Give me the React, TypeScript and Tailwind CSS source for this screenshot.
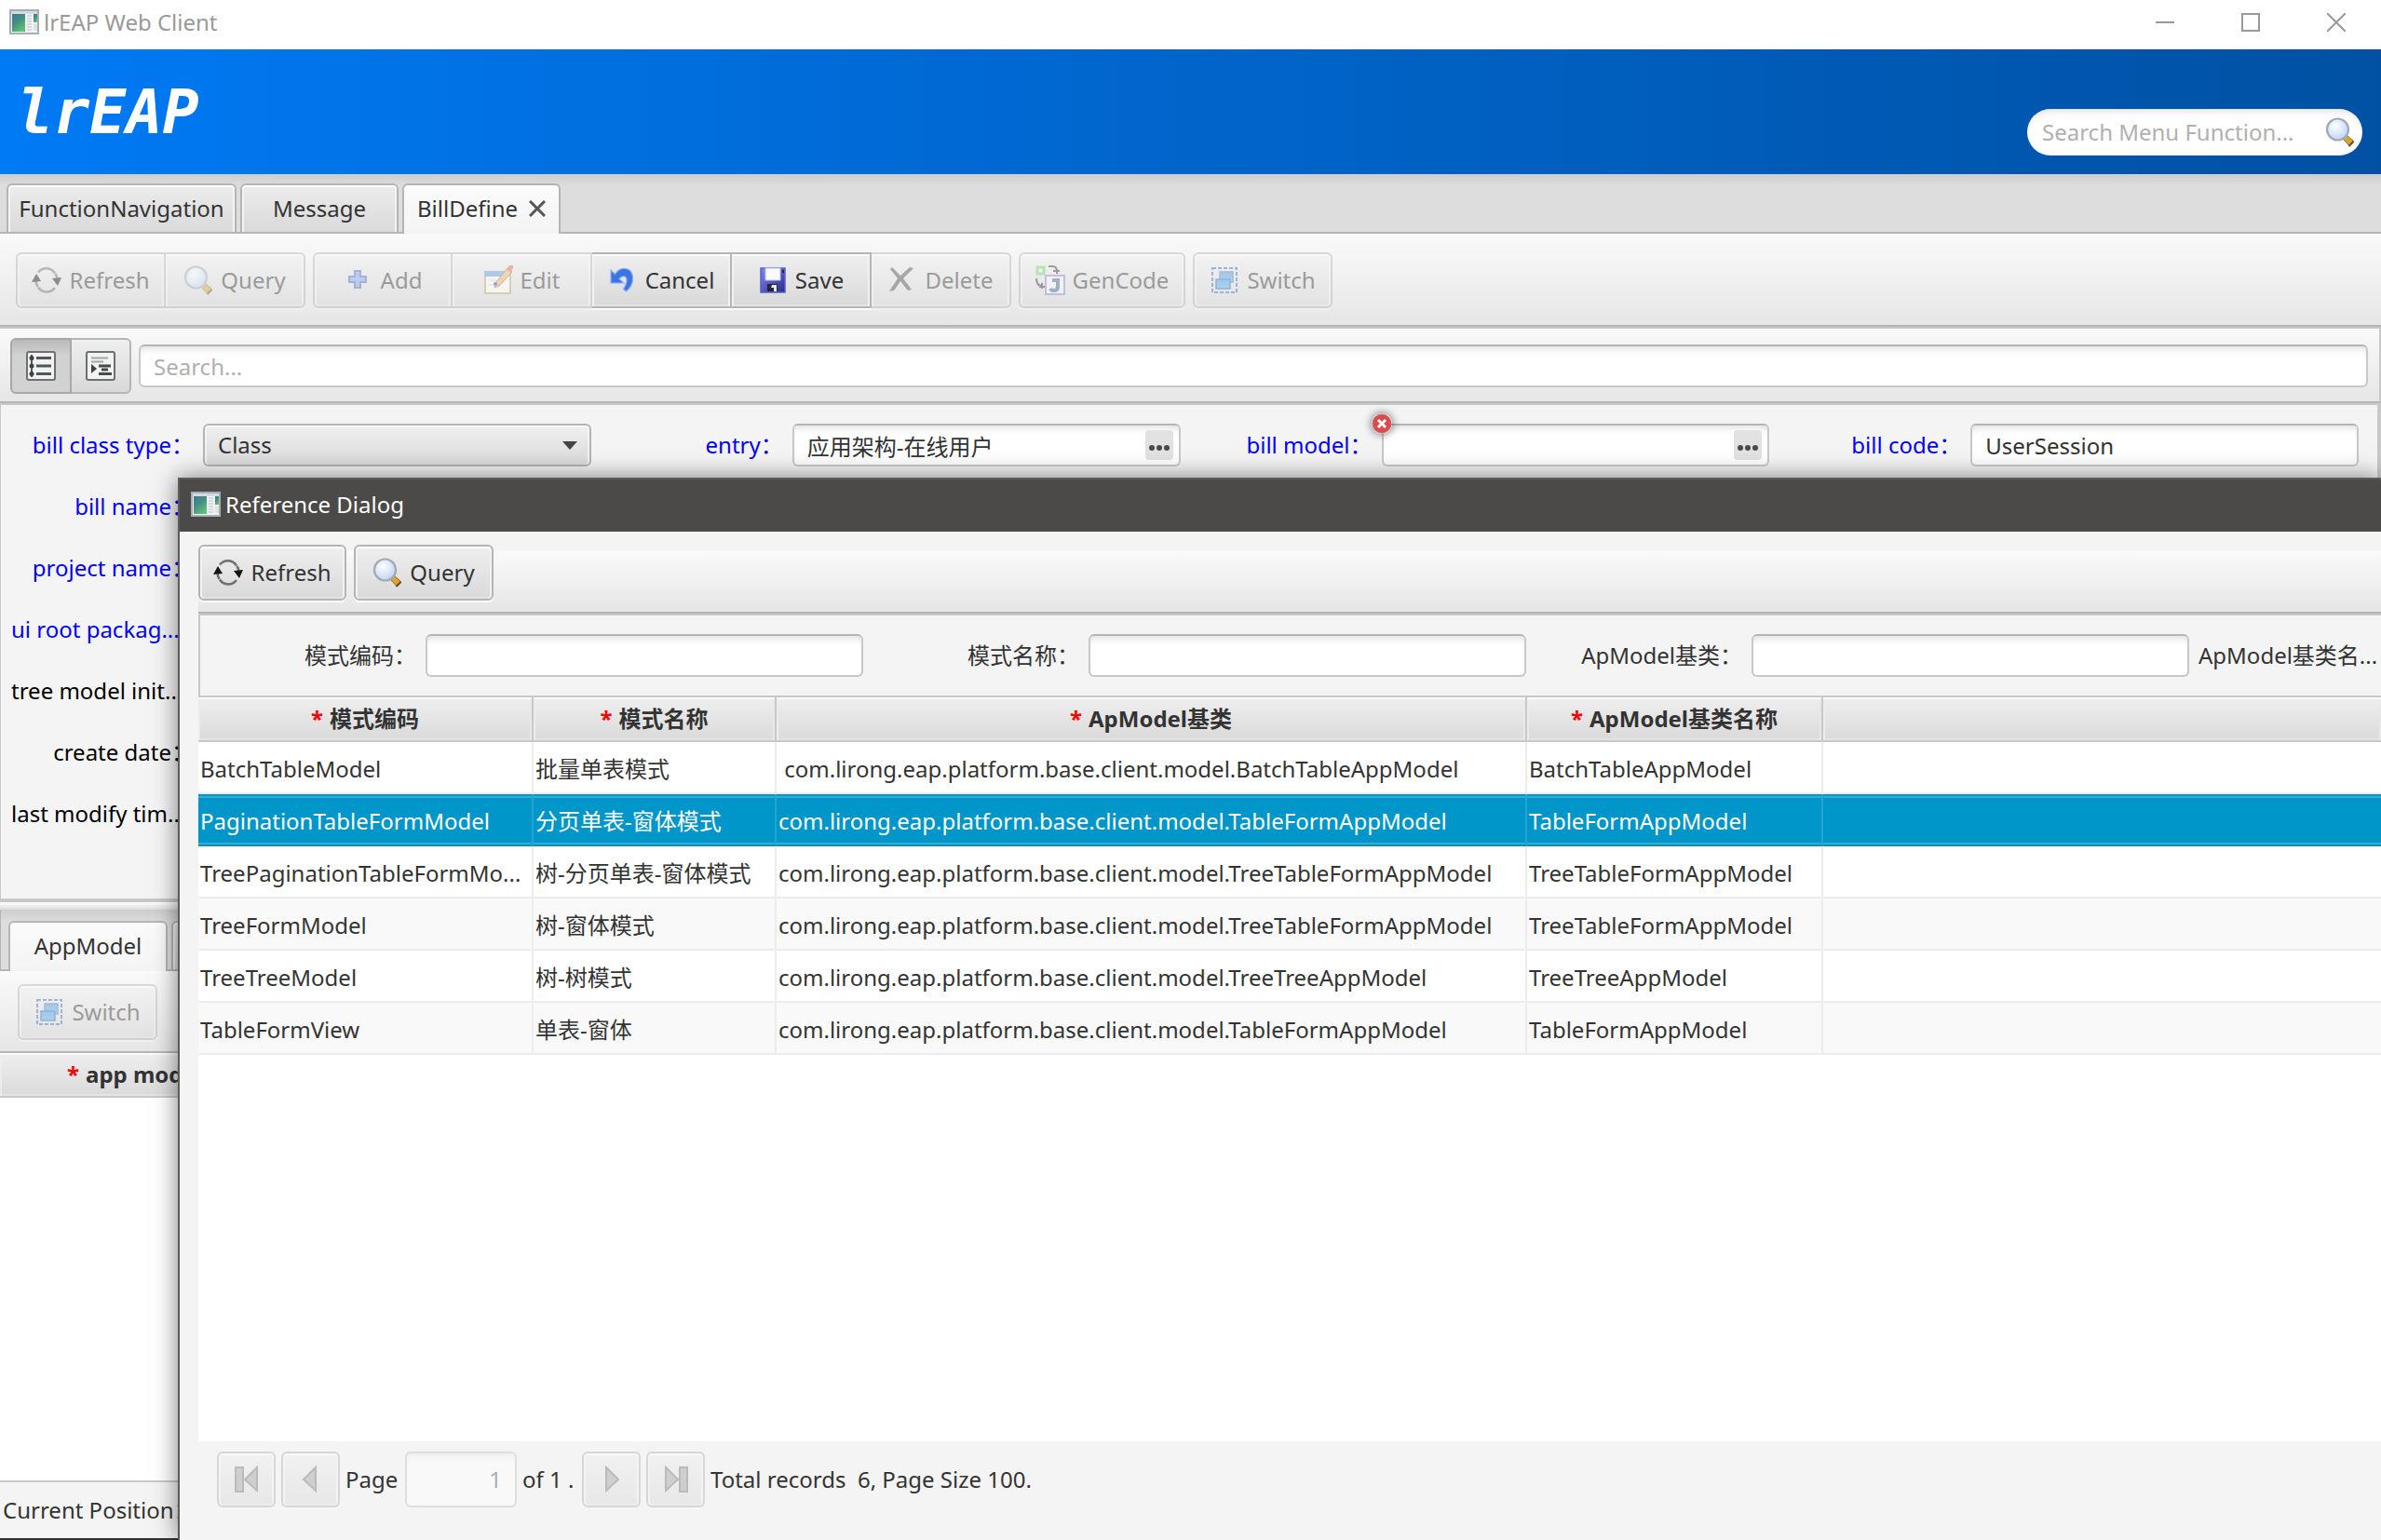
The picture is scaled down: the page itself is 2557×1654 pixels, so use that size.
import { useState } from 'react'
import type { ReactNode } from 'react'

const btn =
  'flex items-center justify-center gap-2 h-[60px] border-2 border-[#b5b5b5] bg-linear-to-b from-[#efefef] to-[#d9d9d9] shadow-[inset_0_2px_0_#fdfdfd,inset_2px_0_0_#f2f2f2,inset_-2px_0_0_#f2f2f2,inset_0_-2px_0_#e3e3e3,0_2px_0_#fafafa] disabled:opacity-45'
const box =
  'h-[46px] border-2 border-[#c8c8c8] border-t-[#b5b5b5] rounded-md bg-white shadow-[inset_0_8px_8px_-6px_#dcdcdc] px-[14px] outline-none placeholder:text-[#b0b0b0]'
const tabIdle = 'bg-linear-to-b from-[#ececec] to-[#dadada] shadow-[inset_0_2px_0_#fff,inset_2px_0_0_#f4f4f4,inset_-2px_0_0_#f4f4f4]'
const tabActive = 'bg-linear-to-b from-[#fbfbfb] to-[#f4f4f4] -mb-[2px] pb-[2px]'
const headCell =
  'h-12 p-0 font-bold border-r-2 border-b-2 border-[#c8c8c8] last:border-r-0 bg-linear-to-b from-[#efefef] to-[#dadada] shadow-[inset_0_2px_0_#fafafa,inset_2px_0_0_#ececec,inset_-2px_0_0_#e8e8e8,inset_0_-2px_0_#e4e4e4]'

const WindowIcon = () => (
  <svg width="32" height="38" viewBox="0 0 32 38" className="shrink-0">
    <defs>
      <linearGradient id="win" x1="0" y1="0" x2="0.6" y2="1">
        <stop offset="0" stopColor="#3f7794" />
        <stop offset="0.5" stopColor="#449083" />
        <stop offset="1" stopColor="#5fbf74" />
      </linearGradient>
    </defs>
    <rect x="1" y="5" width="30" height="30" fill="none" />
    <rect x="1" y="6" width="30" height="25" fill="#f1f2f3" stroke="#a8afb4" strokeWidth="2" />
    <path d="M2 7h28v3H2z" fill="#d3dae0" />
    <rect x="3" y="10" width="14" height="19" fill="url(#win)" />
    <path d="M19 12h5M19 15h5M19 18h5M19 21h5M19 24h5M19 27h5" stroke="#bcc2c6" strokeWidth="1" />
    <rect x="26" y="10" width="4" height="9" fill="url(#win)" />
    <path d="M26 21h4v7h-4z" fill="#dfe1e3" />
  </svg>
)

const RefreshIcon = () => (
  <svg width="32" height="32" viewBox="0 0 32 32" fill="none">
    <path d="M7 7.500C12 1.500 21 2 25 8.500M25.500 9Q27.500 12 27.500 16" stroke="#6f6f6f" strokeWidth="2.600" />
    <path d="M25 24C20 30.500 11 29.500 7 23.500M6.500 23Q4.500 20 4.500 15" stroke="#6f6f6f" strokeWidth="2.600" />
    <path d="M22 14l10-1-4 9z" fill="#151515" />
    <path d="M0 18l5-9 5 8z" fill="#151515" />
  </svg>
)

const QueryIcon = () => (
  <svg width="32" height="32" viewBox="0 0 32 32">
    <defs>
      <radialGradient id="lens" cx="0.4" cy="0.35" r="0.7">
        <stop offset="0" stopColor="#ffffff" />
        <stop offset="1" stopColor="#bcd2f5" />
      </radialGradient>
    </defs>
    <path d="M19 23l4-4 7.500 6.500-4.500 5z" fill="#d9a431" stroke="#8f6a22" strokeWidth="1" />
    <path d="M25.500 31l5-5" stroke="#5c4a2a" strokeWidth="2" />
    <circle cx="13.500" cy="13" r="11.500" fill="url(#lens)" stroke="#a2a9b2" strokeWidth="2.200" />
  </svg>
)

const AddIcon = () => (
  <svg width="32" height="32" viewBox="0 0 32 32">
    <path d="M12 6h6v6h6v6h-6v6h-6v-6H6v-6h6z" fill="#7ba0e8" stroke="#4468bd" strokeWidth="2" />
  </svg>
)

const EditIcon = () => (
  <svg width="32" height="32" viewBox="0 0 32 32">
    <rect x="2" y="7" width="27" height="23" fill="#fdfdfb" stroke="#c2a860" strokeWidth="2" />
    <path d="M1 6h22v6H1z" fill="#5d9ed6" />
    <path d="M5 16h9M5 21h6" stroke="#d8dee8" strokeWidth="1.500" />
    <path d="M13 19L26 3l5 4-14 15-5 2z" fill="#e9b765" stroke="#9a6b35" strokeWidth="1" />
    <path d="M25 4l3-4h4v3l-3 5z" fill="#d96a58" />
    <circle cx="13" cy="20" r="2" fill="#334a7a" />
  </svg>
)

const CancelIcon = () => (
  <svg width="32" height="32" viewBox="0 0 32 32">
    <path d="M3 5v14h14l-5-4.500c3-4 7.500-3.500 8 .5 .5 4-1.500 7-3.500 10.500l3 2.500c5-4 7.500-10 7-15.500C25.500 1.500 13 .5 7.500 9.500z" fill="#3c74e2" stroke="#88b0f6" strokeWidth="1.200" />
  </svg>
)

const SaveIcon = () => (
  <svg width="32" height="32" viewBox="0 0 32 32">
    <defs>
      <linearGradient id="disk" x1="0" y1="0" x2="1" y2="1">
        <stop offset="0" stopColor="#8286f2" />
        <stop offset="1" stopColor="#292b8e" />
      </linearGradient>
    </defs>
    <rect x="3" y="3" width="26" height="26" fill="url(#disk)" stroke="#5a5fc4" strokeWidth="1.500" />
    <rect x="8" y="3" width="16" height="13" fill="#fbfbff" stroke="#b9bdf2" strokeWidth="1" />
    <rect x="26" y="5" width="2" height="3" fill="#1d1f5e" />
    <rect x="10" y="20" width="11" height="8" fill="#23263a" />
    <path d="M15 21h5v7h-3v-4h-3z" fill="#e8e8f0" />
  </svg>
)

const DeleteIcon = () => (
  <svg width="32" height="32" viewBox="0 0 32 32">
    <path d="M4 2l9 9 10-9 4 1-11 11 9 12-4 1-8-10-7 10-5 1 9-14-8-10z" fill="#4e4e4e" />
  </svg>
)

const GenIcon = () => (
  <svg width="32" height="34" viewBox="0 0 32 34" fill="none">
    <rect x="2" y="3" width="7" height="7" fill="#eefbe9" stroke="#6fd060" strokeWidth="3" />
    <path d="M14 2h4q5 0 5 5M19 7h7M23 5v5M1 15q0 8 6 8M7 20v6M4 24h6" stroke="#333" strokeWidth="2" />
    <rect x="11" y="12" width="20" height="20" fill="#f4f4ff" stroke="#8f83dc" strokeWidth="2" />
    <path d="M18 17h6v7q0 4-4 4-3 0-4-2" stroke="#42678f" strokeWidth="4" />
  </svg>
)

const SwitchIcon = () => (
  <svg width="32" height="32" viewBox="0 0 32 32">
    <defs>
      <linearGradient id="sw" x1="0" y1="0" x2="0" y2="1">
        <stop offset="0" stopColor="#4e93dc" />
        <stop offset="1" stopColor="#46b4f6" />
      </linearGradient>
    </defs>
    <rect x="3" y="3" width="26" height="26" fill="none" stroke="#3b67c2" strokeWidth="2" strokeDasharray="4 2" />
    <rect x="11" y="7" width="14" height="11" fill="url(#sw)" stroke="#4a78bd" strokeWidth="1.500" />
    <rect x="7" y="15" width="15" height="10" fill="url(#sw)" stroke="#3564b4" strokeWidth="1.500" />
  </svg>
)

const ListIcon = () => (
  <svg width="34" height="34" viewBox="0 0 34 34">
    <rect x="2" y="2" width="30" height="30" rx="2" fill="#f1f2f1" stroke="#6d7070" strokeWidth="2" />
    <path d="M7 5v24" stroke="#555a5c" strokeWidth="2" />
    <path d="M12 8.500h16M12 17h16M12 25.500h16" stroke="#50575a" strokeWidth="3" />
    <circle cx="7" cy="8.500" r="2.500" fill="#3c4144" />
    <circle cx="7" cy="17" r="2.500" fill="#3c4144" />
    <circle cx="7" cy="25.500" r="2.500" fill="#3c4144" />
  </svg>
)

const IndentIcon = () => (
  <svg width="34" height="34" viewBox="0 0 34 34">
    <rect x="2" y="2" width="30" height="30" rx="2" fill="#f1f2f1" stroke="#6d7070" strokeWidth="2" />
    <path d="M7 8.500h18M7 12.500h13" stroke="#a5a5a0" strokeWidth="2" />
    <path d="M15 17h13M18 21h7M15 25.500h14" stroke="#454b4e" strokeWidth="3" />
    <path d="M7 15l6 5-6 5z" fill="#3c4144" />
  </svg>
)

const pageIcons: Record<string, ReactNode> = {
  first: <><path d="M5 4h8v26H5z" /><path d="M28 4v25L15 17z" /></>,
  prev: <path d="M22 4v25L9 17z" />,
  next: <path d="M11 4v25l13-12z" />,
  last: <><path d="M21 4h8v26h-8z" /><path d="M6 4v25l13-12z" /></>,
}

const PageButton = ({ name }: { name: string }) => (
  <button disabled aria-label={name} className={btn + ' w-[63px] rounded-md'}>
    <svg width="34" height="34" viewBox="0 0 34 34" fill="#a4a4a4" stroke="#777" strokeWidth="2">{pageIcons[name]}</svg>
  </button>
)

const tools = [
  [
    { text: 'Refresh', icon: <RefreshIcon />, off: true, cls: 'w-[161px] rounded-l-md' },
    { text: 'Query', icon: <QueryIcon />, off: true, cls: 'w-[150px] rounded-r-md border-l-0' },
  ],
  [
    { text: 'Add', icon: <AddIcon />, off: true, cls: 'w-[150px] rounded-l-md' },
    { text: 'Edit', icon: <EditIcon />, off: true, cls: 'w-[150px] border-l-0' },
    { text: 'Cancel', icon: <CancelIcon />, off: false, cls: 'w-[150px] border-l-0' },
    { text: 'Save', icon: <SaveIcon />, off: false, cls: 'w-[150px] border-l-0' },
    { text: 'Delete', icon: <DeleteIcon />, off: true, cls: 'w-[150px] rounded-r-md border-l-0' },
  ],
  [{ text: 'GenCode', icon: <GenIcon />, off: true, cls: 'w-[179px] rounded-md' }],
  [{ text: 'Switch', icon: <SwitchIcon />, off: true, cls: 'w-[150px] rounded-md' }],
]

const rows = [
  ['BatchTableModel', '批量单表模式', ' com.lirong.eap.platform.base.client.model.BatchTableAppModel', 'BatchTableAppModel'],
  ['PaginationTableFormModel', '分页单表-窗体模式', 'com.lirong.eap.platform.base.client.model.TableFormAppModel', 'TableFormAppModel'],
  ['TreePaginationTableFormMo...', '树-分页单表-窗体模式', 'com.lirong.eap.platform.base.client.model.TreeTableFormAppModel', 'TreeTableFormAppModel'],
  ['TreeFormModel', '树-窗体模式', 'com.lirong.eap.platform.base.client.model.TreeTableFormAppModel', 'TreeTableFormAppModel'],
  ['TreeTreeModel', '树-树模式', 'com.lirong.eap.platform.base.client.model.TreeTreeAppModel', 'TreeTreeAppModel'],
  ['TableFormView', '单表-窗体', 'com.lirong.eap.platform.base.client.model.TableFormAppModel', 'TableFormAppModel'],
]

const MoreButton = () => (
  <button type="button" aria-label="more" className="absolute right-2 top-[7px] w-[30px] h-8 rounded bg-[#e2e2e2] flex items-center justify-center">
    <svg width="24" height="12" viewBox="0 0 24 12" fill="#4a4a4a">
      <circle cx="4" cy="9" r="3" /><circle cx="12" cy="9" r="3" /><circle cx="20" cy="9" r="3" />
    </svg>
  </button>
)

const Field = ({ id, label, children }: { id: string; label: string; children: ReactNode }) => (
  <div className="flex items-center gap-[10px]">
    <label htmlFor={id} className="w-[196px] shrink-0 text-right whitespace-nowrap text-[#0000ff]">{label}</label>
    <div className="relative flex-1 h-[46px]">{children}</div>
  </div>
)

// rows of the form that continue under the dialog
const sideFields = [
  { label: 'bill name：', cls: 'text-right text-[#0000ff]' },
  { label: 'project name：', cls: 'text-right text-[#0000ff]' },
  { label: 'ui root packag...', cls: 'text-left text-[#0000ff]' },
  { label: 'tree model init...', cls: 'text-left text-black' },
  { label: 'create date：', cls: 'text-right text-black' },
  { label: 'last modify tim...', cls: 'text-left text-black' },
]

const Star = () => <span className="text-[#ff0000] mr-[7px]">*</span>

const ReferenceDialog = () => {
  const [selected, setSelected] = useState(1)

  return (
    <div role="dialog" aria-label="Reference Dialog" className="absolute left-[191px] top-[513px] right-0 bottom-0 flex flex-col overflow-hidden border-l-2 border-t-2 border-[#5b5b59] bg-[#f4f4f4] shadow-[0_0_24px_rgba(0,0,0,0.5)]">
      <div className="h-14 shrink-0 bg-[#4c4a48] flex items-center gap-[5px] pl-3 pb-[2px] text-white">
        <WindowIcon />
        <span>Reference Dialog</span>
      </div>
      <div className="flex-1 flex flex-col pl-5 pt-5">
        <div className="h-[68px] shrink-0 flex items-end gap-2 pb-3 border-b-2 border-[#b5b5b5] bg-linear-to-b from-[#fafafa] to-[#e6e6e6]">
          <button className={btn + ' w-[159px] rounded-md'}><RefreshIcon />Refresh</button>
          <button className={btn + ' w-[150px] rounded-md'}><QueryIcon />Query</button>
        </div>
        <div className="h-[90px] shrink-0 flex items-center gap-[10px] pl-[10px] border-2 border-r-0 border-[#c8c8c8] whitespace-nowrap">
          <label htmlFor="q1" className="w-[222px] shrink-0 text-right">模式编码：</label>
          <input id="q1" className={box + ' w-[470px] shrink-0'} />
          <label htmlFor="q2" className="w-[222px] shrink-0 text-right">模式名称：</label>
          <input id="q2" className={box + ' w-[470px] shrink-0'} />
          <label htmlFor="q3" className="w-[222px] shrink-0 text-right">ApModel基类：</label>
          <input id="q3" className={box + ' w-[470px] shrink-0'} />
          <span>ApModel基类名...</span>
        </div>
        <div className="flex-1 bg-white">
          <table className="w-full table-fixed border-separate border-spacing-0">
            <colgroup>
              <col className="w-[360px]" />
              <col className="w-[261px]" />
              <col className="w-[806px]" />
              <col className="w-[318px]" />
              <col />
            </colgroup>
            <thead>
              <tr>
                <th className={headCell}><Star />模式编码</th>
                <th className={headCell}><Star />模式名称</th>
                <th className={headCell}><Star />ApModel基类</th>
                <th className={headCell}><Star />ApModel基类名称</th>
                <th className={headCell}></th>
              </tr>
            </thead>
            <tbody>
              {rows.map((row, i) => (
                <tr
                  key={i}
                  onClick={() => setSelected(i)}
                  className={i === selected ? 'bg-[#0096c9] text-white' : i % 2 ? 'bg-[#f9f9f9]' : 'bg-white'}
                >
                  {[...row, ''].map((cell, j) => (
                    <td
                      key={j}
                      className={
                        'h-14 p-0 pt-1 pl-[2px] whitespace-pre overflow-hidden border-r-2 border-b-2 last:border-r-0 ' +
                        (i === selected
                          ? 'border-r-[#22a5d1] border-b-[#0d8fbe] shadow-[inset_0_2px_0_#0096c9,inset_0_4px_0_#34acd6,inset_0_-2px_0_#34acd6]'
                          : 'border-[#ededed]')
                      }
                    >
                      {cell}
                    </td>
                  ))}
                </tr>
              ))}
            </tbody>
          </table>
        </div>
        <div className="h-[106px] shrink-0 flex items-start gap-[6px] pt-[11px] pl-5 leading-[60px]">
          <PageButton name="first" />
          <PageButton name="prev" />
          <label htmlFor="page" className="w-[58px]">Page</label>
          <input id="page" disabled defaultValue="1" className="w-[120px] h-[60px] rounded-md border-2 border-[#dedede] bg-[#f9f9f9] shadow-[inset_0_8px_8px_-6px_#ebebeb] px-[14px] text-right text-[#adadad]" />
          <span className="w-[58px] whitespace-nowrap">of 1 .</span>
          <PageButton name="next" />
          <PageButton name="last" />
          <span className="whitespace-pre">Total records  6, Page Size 100.</span>
        </div>
      </div>
    </div>
  )
}

export default function App() {
  const [view, setView] = useState('list')

  return (
    <div className="relative h-screen flex flex-col overflow-hidden bg-[#f4f4f4] text-[#333] text-[24px] leading-8 font-['Noto_Sans','Noto_Sans_CJK_SC',sans-serif]">
      <div className="h-[53px] shrink-0 bg-white flex items-center gap-[5px] pl-[10px] pb-[5px] text-[#999]">
        <WindowIcon />
        <span className="flex-1">lrEAP Web Client</span>
        <div className="flex pr-4 gap-[40px]">
          <button aria-label="Minimize" className="px-4"><svg width="20" height="20" stroke="#999" strokeWidth="2"><path d="M0 10h20" /></svg></button>
          <button aria-label="Maximize" className="px-4"><svg width="20" height="20" fill="none" stroke="#999" strokeWidth="2"><path d="M1 1h18v18H1z" /></svg></button>
          <button aria-label="Close" className="pl-4 pr-[22px]"><svg width="20" height="20" stroke="#999" strokeWidth="2"><path d="M0 0l20 20M20 0L0 20" /></svg></button>
        </div>
      </div>

      <header className="h-[134px] shrink-0 flex items-end justify-between pl-[18px] pr-5 pb-5 bg-linear-to-r from-[#007af5] to-[#0051a3]">
        <h1 className="font-['DejaVu_Sans_Mono',monospace] font-bold italic text-[65px] leading-[92px] text-white">lrEAP</h1>
        <div className="w-[360px] h-[50px] rounded-full bg-white shadow-[inset_0_8px_8px_-6px_#dcdcdc] flex items-center pl-4 pr-2">
          <input aria-label="Search menu" placeholder="Search Menu Function..." className="flex-1 min-w-0 bg-transparent outline-none placeholder:text-[#b0b0b0]" />
          <QueryIcon />
        </div>
      </header>

      <div role="tablist" className="h-16 shrink-0 flex items-end gap-1 pl-[7px] border-b-2 border-[#b5b5b5] bg-linear-to-b from-[#cdcdcd] to-[#dddddd] to-20%">
        <button role="tab" className={'h-[52px] w-[247px] border-2 border-b-0 border-[#b5b5b5] rounded-t-md ' + tabIdle}>FunctionNavigation</button>
        <button role="tab" className={'h-[52px] w-[170px] border-2 border-b-0 border-[#b5b5b5] rounded-t-md ' + tabIdle}>Message</button>
        <button role="tab" aria-selected="true" className={'h-[54px] w-[170px] border-2 border-b-0 border-[#b5b5b5] rounded-t-md flex items-center justify-center gap-3 ' + tabActive}>
          BillDefine
          <svg width="18" height="18" stroke="#555" strokeWidth="3"><path d="M1 1l16 16M17 1L1 17" /></svg>
        </button>
      </div>

      <div className="h-[100px] shrink-0 flex items-start gap-2 pl-[17px] pt-5 border-b-2 border-[#b5b5b5] bg-linear-to-b from-[#fafafa] to-[#e6e6e6]">
        {tools.map((group, i) => (
          <div key={i} className="flex">
            {group.map((t) => (
              <button key={t.text} disabled={t.off} className={btn + ' ' + t.cls}>{t.icon}{t.text}</button>
            ))}
          </div>
        ))}
      </div>

      <div className="h-[82px] shrink-0 flex items-center gap-2 pl-[11px] pr-3 pt-[2px] border-t-2 border-b-2 border-r-2 border-[#c8c8c8] border-b-[#b5b5b5] bg-linear-to-b from-[#fafafa] to-[#e6e6e6]">
        <div className="flex">
          <button
            aria-label="List view"
            onClick={() => setView('list')}
            className={'h-[60px] w-[66px] flex items-center justify-center border-2 border-[#a8a8a8] rounded-l-md ' + (view === 'list' ? 'bg-linear-to-b from-[#b9b9b9] to-[#d2d2d2] to-30%' : 'bg-linear-to-b from-[#efefef] to-[#d9d9d9]')}
          >
            <ListIcon />
          </button>
          <button
            aria-label="Form view"
            onClick={() => setView('form')}
            className={'h-[60px] w-16 flex items-center justify-center border-2 border-l-0 border-[#b5b5b5] rounded-r-md ' + (view === 'form' ? 'bg-linear-to-b from-[#b9b9b9] to-[#d2d2d2] to-30%' : 'bg-linear-to-b from-[#efefef] to-[#d9d9d9]')}
          >
            <IndentIcon />
          </button>
        </div>
        <input aria-label="Search" placeholder="Search..." className={box + ' flex-1'} />
      </div>

      <form className="h-[536px] shrink-0 pt-5 pl-[11px] pr-5 border-t-2 border-b-4 border-l border-r-4 border-[#c8c8c8]">
        <div className="grid grid-cols-4 gap-[10px]">
          <Field id="type" label="bill class type：">
            <select id="type" className="appearance-none w-full h-[46px] px-[14px] rounded-md border-2 border-[#b5b5b5] bg-linear-to-b from-[#efefef] to-[#dadada] shadow-[inset_0_2px_0_#fafafa,inset_2px_0_0_#f2f2f2,inset_-2px_0_0_#f2f2f2]">
              <option>Class</option>
            </select>
            <svg width="16" height="9" className="absolute right-[15px] top-[19px] pointer-events-none" fill="#444"><path d="M0 0h16L8 9z" /></svg>
          </Field>
          <Field id="entry" label="entry：">
            <input id="entry" defaultValue="应用架构-在线用户" className={box + ' w-full'} />
            <MoreButton />
          </Field>
          <Field id="model" label="bill model：">
            <input id="model" className={box + ' w-full'} />
            <MoreButton />
            <svg width="22" height="22" viewBox="0 0 22 22" className="absolute -left-[11px] -top-[11px] rounded-full shadow-[0_0_10px_rgba(0,0,0,0.6)]">
              <circle cx="11" cy="11" r="10" fill="#dc4a4a" stroke="#b96a6a" strokeWidth="1" />
              <path d="M7 7l8 8M15 7l-8 8" stroke="#fff" strokeWidth="3" />
            </svg>
          </Field>
          <Field id="code" label="bill code：">
            <input id="code" defaultValue="UserSession" className={box + ' w-full'} />
          </Field>
        </div>
        <div className="flex flex-col gap-5 pt-5">
          {sideFields.map((f) => (
            <div key={f.label} className={'w-[196px] h-[46px] leading-[46px] whitespace-nowrap ' + f.cls}>{f.label}</div>
          ))}
        </div>
      </form>

      <div className="h-2 shrink-0 bg-linear-to-b from-white to-[#dcdcdc]"></div>

      <div role="tablist" className="h-[66px] shrink-0 flex items-end gap-1 pl-2 border-l border-b-2 border-[#b5b5b5] bg-linear-to-b from-[#cdcdcd] to-[#dddddd] to-20%">
        <button role="tab" aria-selected="true" className={'h-[54px] w-[171px] border-2 border-b-0 border-[#b5b5b5] rounded-t-md ' + tabActive}>AppModel</button>
        <button role="tab" aria-label="Detail" className={'h-[52px] w-[171px] border-2 border-b-0 border-[#b5b5b5] rounded-t-md ' + tabIdle}></button>
      </div>
      <div className="h-[88px] shrink-0 pl-[19px] pt-[14px] border-b-2 border-[#b5b5b5] bg-linear-to-b from-[#fafafa] to-[#e6e6e6]">
        <button disabled className={btn + ' w-[150px] rounded-md'}><SwitchIcon />Switch</button>
      </div>
      <div className="flex-1 bg-white">
        <table className="w-full border-separate border-spacing-0">
          <thead>
            <tr><th className={headCell + ' text-left pl-[72px]'}><Star />app mod</th></tr>
          </thead>
        </table>
      </div>
      <footer className="h-16 shrink-0 border-t-2 border-b-2 border-t-[#c8c8c8] border-b-[#333] pl-[3px] leading-[60px]">Current Position：</footer>

      <ReferenceDialog />
    </div>
  )
}
